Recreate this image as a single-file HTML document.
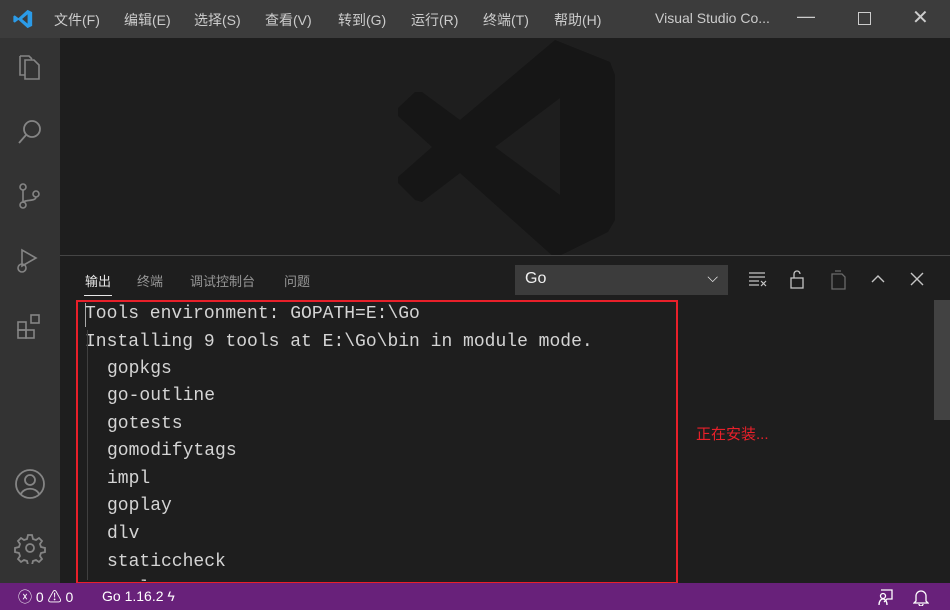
<!DOCTYPE html><html><head><meta charset="utf-8"><style>
body{margin:0;width:950px;height:610px;overflow:hidden;background:#1e1e1e;font-family:"Liberation Sans","Noto Sans CJK SC",sans-serif;position:relative}
.a{position:absolute}
#title{left:0;top:0;width:950px;height:38px;background:#3c3c3c;color:#ccc;font-size:14px}
#title span{position:absolute;top:10px}
#act{left:0;top:38px;width:60px;height:545px;background:#333}
#status{left:0;top:583px;width:950px;height:27px;background:#68217a;color:#fff;font-size:14px}
.tab{position:absolute;top:271px;font-size:13px;color:#969696}
.line{position:absolute;font-family:"Liberation Mono",monospace;font-size:18px;color:#d4d4d4;white-space:pre}
</style></head><body>
<div id="title" class="a">
<svg class="a" style="left:12px;top:8px" width="22" height="22" viewBox="0 0 24 24"><path d="M17 2 L22 4.5 V19.5 L17 22 L7 13 L3 16 L1.5 15 V9 L3 8 L7 11 Z M17 7 L11 12 L17 17 Z" fill="#2b9be8" fill-rule="evenodd"/></svg>
<span style="left:54px">文件(F)</span><span style="left:124px">编辑(E)</span><span style="left:194px">选择(S)</span><span style="left:265px">查看(V)</span><span style="left:338px">转到(G)</span><span style="left:411px">运行(R)</span><span style="left:483px">终端(T)</span><span style="left:554px">帮助(H)</span>
<span style="left:655px">Visual Studio Co...</span>
<span style="left:797px;font-size:18px;top:6px">—</span>
<div class="a" style="left:858px;top:12px;width:11px;height:11px;border:1px solid #ccc"></div>
<span style="left:912px;font-size:20px;top:5px">✕</span>
</div>
<div id="act" class="a">
<svg class="a" style="left:16px;top:16px" width="28" height="28" viewBox="0 0 28 28" fill="none" stroke="#858585" stroke-width="1.6"><path d="M9 6h9l5 5v14H9z M4 2h9l3 3 M4 2v19h5"/></svg>
<svg class="a" style="left:16px;top:80px" width="28" height="28" viewBox="0 0 28 28" fill="none" stroke="#858585" stroke-width="1.8"><circle cx="16" cy="11" r="8"/><path d="M10 17 3 25"/></svg>
<svg class="a" style="left:16px;top:144px" width="28" height="28" viewBox="0 0 28 28" fill="none" stroke="#858585" stroke-width="1.6"><circle cx="7" cy="5" r="3"/><circle cx="7" cy="23" r="3"/><circle cx="20" cy="12" r="3"/><path d="M7 8v12 M20 15c0 5-13 2-13 6"/></svg>
<svg class="a" style="left:14px;top:208px" width="30" height="30" viewBox="0 0 30 30" fill="none" stroke="#858585" stroke-width="1.6"><path d="M8 4v16l14-8z"/><circle cx="8" cy="22" r="4"/></svg>
<svg class="a" style="left:16px;top:274px" width="30" height="30" viewBox="0 0 30 30" fill="none" stroke="#858585" stroke-width="1.6"><rect x="2" y="10" width="8" height="8"/><rect x="2" y="18" width="8" height="8"/><rect x="10" y="18" width="8" height="8"/><rect x="15" y="3" width="8" height="8"/></svg>
<svg class="a" style="left:14px;top:430px" width="32" height="32" viewBox="0 0 32 32" fill="none" stroke="#858585" stroke-width="1.8"><circle cx="16" cy="16" r="14"/><circle cx="16" cy="12" r="5"/><path d="M7 26c3-7 15-7 18 0"/></svg>
<svg class="a" style="left:14px;top:494px" width="32" height="32" viewBox="0 0 32 32" fill="none" stroke="#858585" stroke-width="1.8"><circle cx="16" cy="16" r="4"/><path d="M14 3h4l1 4 3 1 3-2 3 3-2 3 1 3 4 1v4l-4 1-1 3 2 3-3 3-3-2-3 1-1 4h-4l-1-4-3-1-3 2-3-3 2-3-1-3-4-1v-4l4-1 1-3-2-3 3-3 3 2 3-1z"/></svg>
</div>
<svg class="a" style="left:370px;top:40px" width="270" height="215" viewBox="0 0 270 215"><path fill="#161616" fill-rule="evenodd" d="M185 0 L240 22 L245 35 L245 180 L238 192 L185 218 L90 133 L52 162 L45 160 L28 143 L28 137 L62 107 L28 76 L28 68 L45 52 L52 52 L90 80 Z M190 58 L125 107 L190 155 Z"/></svg>
<div class="a" style="left:60px;top:255px;width:890px;height:1px;background:#454545"></div>
<div class="tab" style="left:85px;color:#e7e7e7">输出</div>
<div class="a" style="left:84px;top:295px;width:28px;height:1px;background:#e7e7e7"></div>
<div class="tab" style="left:137px">终端</div>
<div class="tab" style="left:190px">调试控制台</div>
<div class="tab" style="left:284px">问题</div>
<div class="a" style="left:515px;top:265px;width:213px;height:30px;background:#3c3c3c;color:#f0f0f0;font-size:16px"><span style="position:absolute;left:10px;top:5px">Go</span><span style="position:absolute;right:10px;top:4px;font-size:14px">⌵</span></div>
<svg class="a" style="left:748px;top:270px" width="20" height="18" fill="none" stroke="#c5c5c5" stroke-width="1.2"><path d="M1 3h16M1 7h16M1 11h10M1 15h10M13 11l5 5M18 11l-5 5"/></svg>
<svg class="a" style="left:788px;top:268px" width="18" height="22" fill="none" stroke="#c5c5c5" stroke-width="1.3"><rect x="3" y="10" width="12" height="10"/><path d="M6 10V6a3 3 0 0 1 6 0"/></svg>
<svg class="a" style="left:828px;top:268px" width="20" height="22" fill="none" stroke="#6a6a6a" stroke-width="1.3"><path d="M4 6h10l3 3v12H4z M7 3h6"/></svg>
<svg class="a" style="left:870px;top:272px" width="16" height="14" fill="none" stroke="#c5c5c5" stroke-width="1.4"><path d="M2 10l6-6 6 6"/></svg>
<svg class="a" style="left:910px;top:272px" width="14" height="14" fill="none" stroke="#c5c5c5" stroke-width="1.4"><path d="M1 1l12 12M13 1L1 13"/></svg>
<div class="a" style="left:934px;top:300px;width:16px;height:120px;background:#424242"></div>
<div class="a" style="left:85px;top:303px;width:1px;height:24px;background:#aaa"></div>
<div class="line" style="left:85px;top:304px">Tools environment: GOPATH=E:\Go</div>
<div class="line" style="left:85px;top:332px">Installing 9 tools at E:\Go\bin in module mode.</div>
<div class="line" style="left:107px;top:359px">gopkgs</div>
<div class="line" style="left:107px;top:386px">go-outline</div>
<div class="line" style="left:107px;top:414px">gotests</div>
<div class="line" style="left:107px;top:441px">gomodifytags</div>
<div class="line" style="left:107px;top:469px">impl</div>
<div class="line" style="left:107px;top:496px">goplay</div>
<div class="line" style="left:107px;top:524px">dlv</div>
<div class="line" style="left:107px;top:552px">staticcheck</div>
<div class="line" style="left:107px;top:579px;height:2px;overflow:hidden">gopls</div>
<div class="a" style="left:87px;top:330px;width:1px;height:250px;background:#404040"></div>
<div class="a" style="left:76px;top:300px;width:598px;height:280px;border:2px solid #e8202a"></div>
<div class="a" style="left:696px;top:423px;color:#e8202a;font-size:15px">正在安装...</div>
<div id="status" class="a">
<span class="a" style="left:18px;top:4px">ⓧ 0 ⚠ 0</span>
<span class="a" style="left:102px;top:5px">Go 1.16.2 ϟ</span>
<svg class="a" style="left:876px;top:5px" width="18" height="18" fill="none" stroke="#fff" stroke-width="1.3"><path d="M5 2h11v9h-5l-3 3 M3 17c0-4 2-6 4-6s4 2 4 6"/><circle cx="7" cy="8" r="2.5"/></svg>
<svg class="a" style="left:913px;top:5px" width="16" height="18" fill="none" stroke="#fff" stroke-width="1.3"><path d="M3 13V8a5 5 0 0 1 10 0v5l2 2H1z M6 16a2 2 0 0 0 4 0"/></svg>
</div>
</body></html>
